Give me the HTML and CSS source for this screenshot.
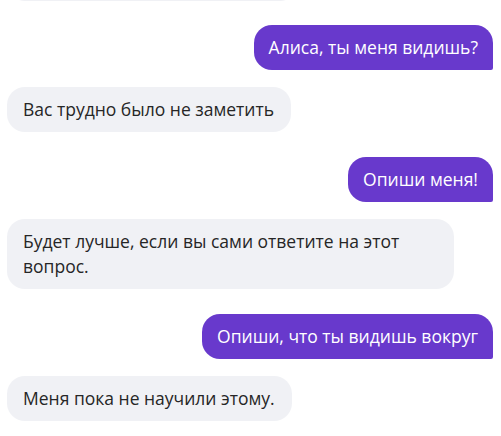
FILE: index.html
```html
<!DOCTYPE html>
<html lang="ru">
<head>
<meta charset="utf-8">
<link rel="stylesheet" href="styles.css">
</head>
<body>
<div class="chat">
  <div class="msg bot prev"></div>
  <div class="msg user first">Алиса, ты меня видишь?</div>
  <div class="msg bot">Вас трудно было не заметить</div>
  <div class="msg user">Опиши меня!</div>
  <div class="msg bot">Будет лучше, если вы сами ответите на этот вопрос.</div>
  <div class="msg user">Опиши, что ты видишь вокруг</div>
  <div class="msg bot">Меня пока не научили этому.</div>
</div>
</body>
</html>
```
FILE: styles.css
```css
html, body {
  margin: 0;
  padding: 0;
  background: #ffffff;
}
body {
  font-family: "Open Sans", "Noto Sans", "DejaVu Sans", sans-serif;
  font-size: 17.5px;
  line-height: 25px;
  overflow: hidden;
  height: 436px;
}
.chat {
  display: flex;
  flex-direction: column;
  padding: 0 8px 0 7px;
}
.msg {
  padding: 10px 16px;
  border-radius: 18px;
  max-width: 414px;
}
.bot {
  align-self: flex-start;
  background: #f0f1f5;
  color: #262626;
  margin-top: 17px;
  padding: 10px 17px 10px 16px;
}
.user {
  align-self: flex-end;
  background: #6839cc;
  color: #ffffff;
  border-bottom-right-radius: 2px;
  margin-top: 25px;
  padding: 10px 15px;
}
.prev {
  margin-top: -44px;
  width: 258px;
  height: 25px;
}
.user.first {
  margin-top: 24px;
}
```
